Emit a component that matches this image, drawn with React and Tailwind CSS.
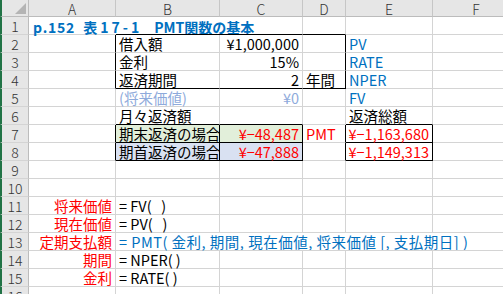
import React from "react";

const R = { g: "border-r border-r-[#d4d4d4]", k: "border-r border-r-black", n: "" };
const B = { g: "border-b border-b-[#d4d4d4]", k: "border-b border-b-black", n: "" };

const RED = "text-[#ff0000]";
const BLUE = "text-[#0070c0]";

const Title = () => (
  <span className="text-[#0070c0] font-bold text-[14px]">
    <span className="tracking-[0.8px]">p.152</span>
    <span className="ml-[8px] tracking-[3px]">表17-1</span>
    <span className="ml-[12px]">PMT関数の基本</span>
  </span>
);

// each cell: [text, right, bottom, extra classes]
const rows = [
  [
    [<Title key="t" />, "n", "g", "pl-[4px]"],
    ["", "n", "k"],
    ["", "g", "k"],
    ["", "g", "k"],
    ["", "g", "g"],
    ["", "g", "g"],
  ],
  [
    ["", "k", "g"],
    ["借入額", "g", "g"],
    ["¥1,000,000", "g", "g", "justify-end"],
    ["", "k", "g"],
    ["PV", "g", "g", BLUE],
    ["", "g", "g"],
  ],
  [
    ["", "k", "g"],
    ["金利", "g", "g"],
    ["15%", "g", "g", "justify-end"],
    ["", "k", "g"],
    ["RATE", "g", "g", BLUE],
    ["", "g", "g"],
  ],
  [
    ["", "k", "g"],
    ["返済期間", "g", "k"],
    ["2", "g", "k", "justify-end"],
    ["年間", "k", "k"],
    ["NPER", "g", "g", BLUE],
    ["", "g", "g"],
  ],
  [
    ["", "g", "g"],
    ["(将来価値)", "g", "g", "text-[#8eaadb]"],
    ["¥0", "g", "g", "justify-end text-[#8eaadb]"],
    ["", "g", "g"],
    ["FV", "g", "g", BLUE],
    ["", "g", "g"],
  ],
  [
    ["", "g", "g"],
    ["月々返済額", "g", "k"],
    ["", "g", "k"],
    ["", "g", "g"],
    ["返済総額", "g", "k"],
    ["", "g", "g"],
  ],
  [
    ["", "k", "g"],
    ["期末返済の場合", "k", "k", "bg-[#e2efda]"],
    ["¥−48,487", "k", "k", "justify-end bg-[#e2efda] text-[#ff0000]"],
    ["PMT", "k", "g", RED],
    ["¥−1,163,680", "k", "k", "justify-end text-[#ff0000]"],
    ["", "g", "g"],
  ],
  [
    ["", "k", "g"],
    ["期首返済の場合", "k", "k", "bg-[#d9e1f2]"],
    ["¥−47,888", "k", "k", "justify-end bg-[#d9e1f2] text-[#ff0000]"],
    ["", "k", "g"],
    ["¥−1,149,313", "k", "k", "justify-end text-[#ff0000]"],
    ["", "g", "g"],
  ],
  [
    ["", "g", "g"], ["", "g", "g"], ["", "g", "g"], ["", "g", "g"], ["", "g", "g"], ["", "g", "g"],
  ],
  [
    ["", "g", "g"], ["", "g", "g"], ["", "g", "g"], ["", "g", "g"], ["", "g", "g"], ["", "g", "g"],
  ],
  [
    ["将来価値", "g", "g", "justify-end text-[#ff0000]"],
    ["= FV(   )", "g", "g"],
    ["", "g", "g"], ["", "g", "g"], ["", "g", "g"], ["", "g", "g"],
  ],
  [
    ["現在価値", "g", "g", "justify-end text-[#ff0000]"],
    ["= PV(   )", "g", "g"],
    ["", "g", "g"], ["", "g", "g"], ["", "g", "g"], ["", "g", "g"],
  ],
  [
    ["定期支払額", "g", "g", "justify-end text-[#ff0000]"],
    ["= PMT( 金利, 期間, 現在価値, 将来価値 [, 支払期日] )", "n", "g", "text-[#0070c0] tracking-[0.5px]"],
    ["", "n", "g"], ["", "n", "g"], ["", "n", "g"], ["", "n", "g"],
  ],
  [
    ["期間", "g", "g", "justify-end text-[#ff0000]"],
    ["= NPER( )", "g", "g"],
    ["", "g", "g"], ["", "g", "g"], ["", "g", "g"], ["", "g", "g"],
  ],
  [
    ["金利", "g", "g", "justify-end text-[#ff0000]"],
    ["= RATE( )", "g", "g"],
    ["", "g", "g"], ["", "g", "g"], ["", "g", "g"], ["", "g", "g"],
  ],
  [
    ["", "g", "g"], ["", "g", "g"], ["", "g", "g"], ["", "g", "g"], ["", "g", "g"], ["", "g", "g"],
  ],
];

const cols = ["A", "B", "C", "D", "E", "F"];

export default function App() {
  return (
    <div
      className="w-[503px] h-[294px] overflow-hidden bg-white text-black text-[14.5px]"
      style={{ fontFamily: '"Noto Sans CJK JP", "Liberation Sans", sans-serif' }}
    >
      <div className="grid grid-cols-[29px_87px_104px_83px_43px_87px_87px] grid-rows-[17px_repeat(16,18px)]">
        {/* corner */}
        <div className="border-l-2 border-l-[#217346] border-r border-r-[#bcbcbc] border-b border-b-[#bcbcbc] bg-[#e6e6e6] flex items-end justify-end pr-[2px] pb-[2px]">
          <svg width="11" height="11" viewBox="0 0 11 11">
            <polygon points="11,0 11,11 0,11" fill="#b4b4b4" />
          </svg>
        </div>
        {cols.map((c) => (
          <div
            key={c}
            className="bg-[#e6e6e6] border-r border-r-[#c6c6c6] border-b border-b-[#bcbcbc] flex items-center justify-center pt-px text-[#333] text-[14px] font-light leading-none"
          >
            {c}
          </div>
        ))}
        {rows.map((row, i) => (
          <React.Fragment key={i}>
            <div className="border-l-2 border-l-[#217346] bg-[#e6e6e6] border-r border-r-[#bcbcbc] border-b border-b-[#d4d4d4] flex items-center justify-center pt-px text-[#333] text-[14px] font-light leading-none">
              {i + 1}
            </div>
            {row.map(([t, r, b, extra = ""], j) => (
              <div
                key={j}
                className={`${R[r]} ${B[b]} ${extra} flex items-center pt-[2px] px-[3px] whitespace-pre leading-none min-w-0`}
              >
                {t}
              </div>
            ))}
          </React.Fragment>
        ))}
      </div>
    </div>
  );
}
